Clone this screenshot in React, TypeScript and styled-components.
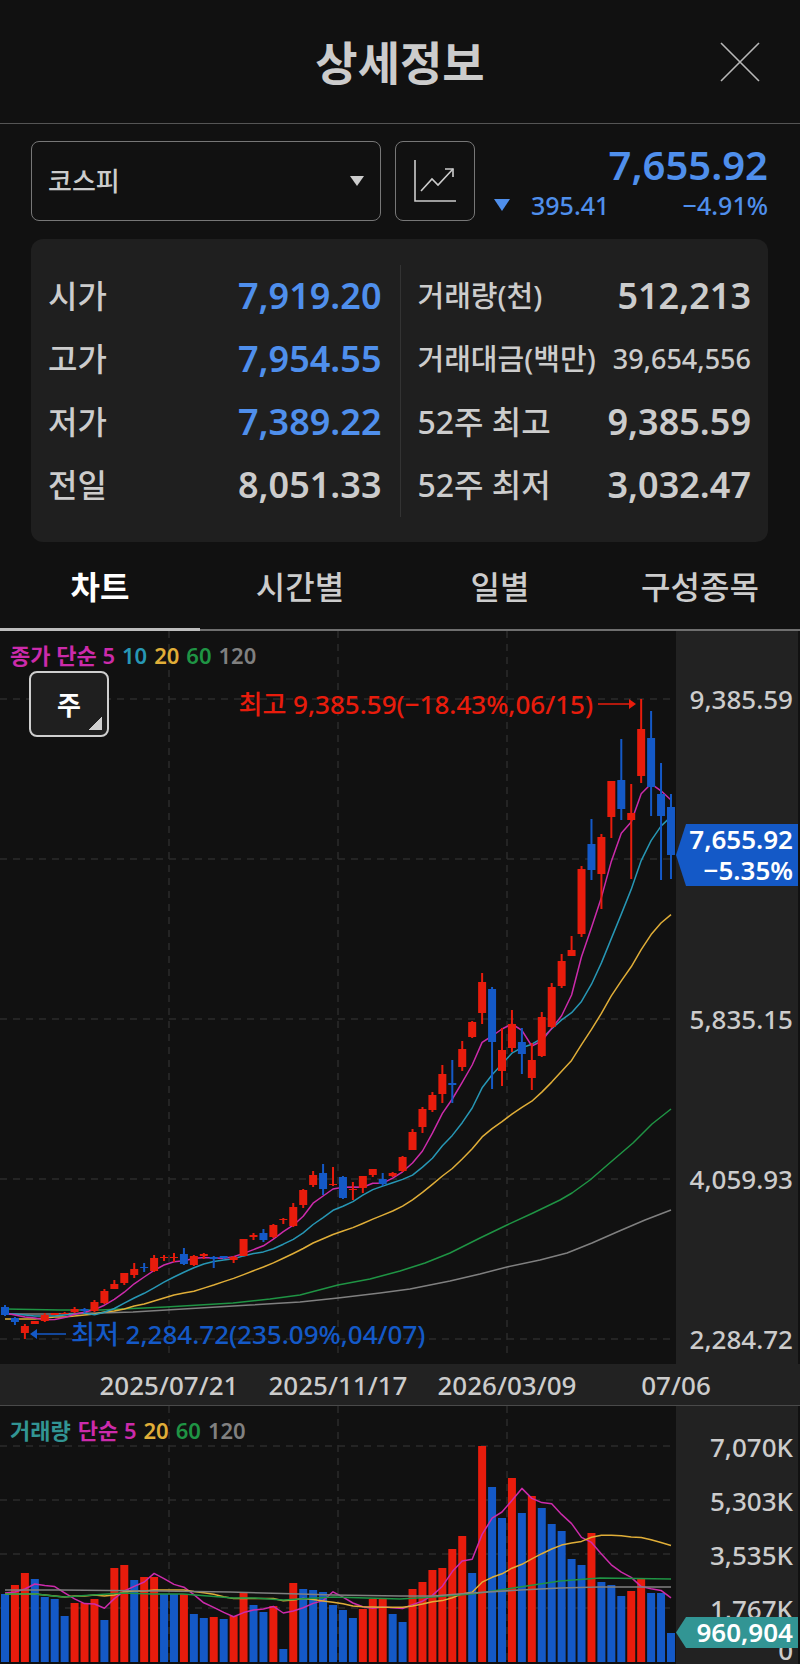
import React, { useState } from 'react';
import styled, { createGlobalStyle } from 'styled-components';

const color = {
  page: '#111111',
  panel: '#1f1f1f',
  axis: '#222222',
  text: '#cccccc',
  blue: '#4f8fec',
  up: '#e81c0c',
  down: '#1459c7',
  teal: '#329594',
  ma5: '#cc2bab',
  ma10: '#2797b5',
  ma20: '#e0ae38',
  ma60: '#1f9444',
  ma120: '#808080',
};

const AXIS_WIDTH = 124;
const PLOT_W = 676;
const PRICE_H = 733;
const VOLUME_H = 258;
const VOLUME_BASE = 256;

/* ---------- data ---------- */

type Candle = [high: number, top: number, bottom: number, low: number, up: 0 | 1];

const candles: Candle[] = [
  [674, 676, 684, 685, 0], [686, 687, 691, 694, 0], [693, 695, 702, 708, 1], [690, 690, 693, 693, 1],
  [682, 684, 690, 691, 1], [682, 682, 684, 684, 1], [681, 682, 683, 683, 1], [676, 678, 681, 682, 1],
  [677, 678, 680, 682, 0], [669, 671, 680, 681, 1], [658, 660, 672, 673, 1], [649, 653, 658, 658, 1],
  [642, 642, 652, 654, 1], [632, 638, 644, 647, 1], [632, 636, 637, 641, 0], [624, 627, 640, 641, 1],
  [624, 626, 627, 630, 1], [622, 626, 627, 631, 1], [617, 623, 633, 634, 0], [624, 625, 634, 635, 1],
  [622, 623, 625, 628, 1], [625, 626, 628, 637, 0], [625, 625, 627, 628, 0], [625, 626, 629, 632, 1],
  [608, 608, 625, 625, 1], [602, 604, 606, 609, 1], [598, 602, 609, 611, 0], [593, 594, 606, 607, 1],
  [587, 588, 589, 593, 1], [572, 576, 595, 596, 1], [558, 559, 574, 577, 1], [540, 544, 554, 556, 1],
  [533, 542, 558, 564, 0], [536, 553, 554, 555, 1], [545, 546, 567, 568, 0], [551, 558, 559, 569, 1],
  [545, 545, 557, 562, 1], [538, 538, 544, 546, 1], [542, 548, 553, 555, 0], [541, 542, 545, 546, 1],
  [525, 526, 540, 541, 1], [498, 501, 519, 519, 1], [476, 478, 496, 502, 1], [461, 464, 479, 481, 1],
  [434, 443, 463, 472, 1], [429, 452, 454, 472, 0], [410, 418, 436, 440, 1], [390, 391, 406, 407, 1],
  [342, 351, 382, 393, 1], [356, 358, 411, 458, 0], [397, 419, 440, 455, 1], [379, 393, 417, 421, 1],
  [397, 411, 423, 443, 0], [412, 429, 447, 459, 1], [381, 386, 425, 426, 1], [352, 356, 396, 397, 1],
  [323, 330, 355, 357, 1], [305, 319, 325, 325, 1], [235, 238, 303, 306, 1], [188, 213, 239, 249, 0],
  [203, 206, 243, 278, 1], [150, 150, 186, 207, 1], [108, 149, 178, 189, 0], [153, 182, 189, 248, 1],
  [68, 98, 145, 152, 1], [80, 107, 156, 185, 0], [132, 163, 185, 249, 0], [163, 176, 224, 248, 0],
];

const volumes = [
  188, 179, 167, 173, 191, 193, 210, 197, 197, 193, 214, 162, 159, 174, 171, 171, 188, 188, 188, 208,
  212, 211, 213, 210, 187, 199, 206, 200, 243, 177, 183, 184, 186, 199, 204, 212, 203, 193, 193, 208,
  216, 183, 176, 164, 162, 143, 130, 167, 40, 81, 112, 72, 107, 90, 102, 118, 125, 153, 159, 127,
  176, 179, 190, 185, 173, 187, 187, 227,
];
const volumeSides = 'drrdddd' + 'rrrdrrdrr' + 'ddrddrdrrddrdr' + 'ddddddrrrdd' + 'rrrrrrdrddrdrddddd' + 'rdddrrddd';

const centre = (i: number) => 5 + i * 9.94;

/* Mean of the last n values; `head` holds the values before a full window exists. */
const movingAverage = (values: number[], n: number, head: number[]) =>
  values
    .map((_, i) => {
      const y = i < n - 1 ? head[i] : values.slice(i - n + 1, i + 1).reduce((a, b) => a + b, 0) / n;
      return `${centre(i).toFixed(1)},${y.toFixed(1)}`;
    })
    .join(' ');

const closes = candles.map(([, top, bottom, , up]) => (up ? top : bottom));

const priceLines = [
  { stroke: color.ma120, points: '5,683 50,683 100,682 133,681 200,677 250,674 300,671 338,667 380,662 410,658 450,650 480,643 507,636 540,629 567,622 592,612 617,601 645,589 671,579' },
  { stroke: color.ma60, points: '5,678 60,679 100,679 166,676 233,672 270,668 300,664 338,654 370,648 400,640 425,632 450,622 480,607 507,594 533,582 560,569 572,562 590,549 612,530 633,512 652,493 671,478' },
  { stroke: color.ma20, points: movingAverage(closes, 20, [688, 688, 688, 688, 687, 686, 686, 685, 684, 683, 681, 680, 678, 675, 673, 670, 667, 664, 662]) },
  { stroke: color.ma10, points: movingAverage(closes, 10, [683, 683, 684, 685, 685, 685, 684, 683, 682]) },
  { stroke: color.ma5, points: movingAverage(closes, 5, [682, 684, 686, 687]) },
];

const volumeLines = [
  { stroke: color.ma5, points: movingAverage(volumes, 5, [187, 186, 183, 178]) },
  { stroke: color.ma20, points: movingAverage(volumes, 20, [188, 188, 188, 188, 189, 190, 191, 190, 190, 189, 190, 189, 186, 185, 185, 184, 184, 184, 184]) },
  { stroke: color.ma60, points: '5,188 35,188 63,191 93,189 123,187 153,188 183,188 233,192 255,192 283,194 333,191 400,193 433,191 472,188 520,181 560,175 600,172 671,173' },
  { stroke: color.ma120, points: '5,184 60,184 160,185 230,186 300,188 333,189 400,190 433,190 472,187 520,184 560,182 600,181 671,181' },
];

const leftStats = [
  { label: '시가', value: '7,919.20', falling: true },
  { label: '고가', value: '7,954.55', falling: true },
  { label: '저가', value: '7,389.22', falling: true },
  { label: '전일', value: '8,051.33' },
];
const rightStats = [
  { label: '거래량(천)', value: '512,213', tightLabel: true },
  { label: '거래대금(백만)', value: '39,654,556', tightLabel: true, tightValue: true },
  { label: '52주 최고', value: '9,385.59' },
  { label: '52주 최저', value: '3,032.47' },
];
const tabs = ['차트', '시간별', '일별', '구성종목'];
const dates = ['2025/07/21', '2025/11/17', '2026/03/09', '07/06'];
const priceTicks = [
  { row: 1, text: '9,385.59' },
  { row: 3, text: '5,835.15' },
  { row: 4, text: '4,059.93' },
  { row: 5, text: '2,284.72' },
];
const volumeTicks = ['7,070K', '5,303K', '3,535K', '1,767K', '0'].map((text, i) => ({ row: i + 1, text }));

/* ---------- styles ---------- */

const GlobalStyle = createGlobalStyle`
  *, *::before, *::after { box-sizing: border-box; }
  body {
    margin: 0;
    background: ${color.page};
    color: ${color.text};
    font-family: 'Noto Sans', 'Noto Sans CJK KR', sans-serif;
    font-weight: 500;
  }
  button, select { font: inherit; color: inherit; }
  dl, dd, ol, p, h1 { margin: 0; padding: 0; }
`;

const Page = styled.main`
  display: flex;
  flex-direction: column;
  min-width: 720px;
`;

const Header = styled.header`
  display: grid;
  grid-template-columns: 1fr auto 1fr;
  align-items: center;
  height: 124px;
  padding: 0 40px;
  border-bottom: 1px solid #555;
`;

const Title = styled.h1`
  grid-column: 2;
  font-size: 46px;
  line-height: 60px;
  font-weight: 700;
`;

const CloseButton = styled.button`
  justify-self: end;
  display: flex;
  padding: 0;
  border: 0;
  background: none;
  cursor: pointer;
`;

const QuoteBar = styled.section`
  display: flex;
  gap: 14px;
  padding: 17px 32px 18px 31px;
`;

const SelectBox = styled.div`
  display: grid;
  flex: 0 1 350px;
  align-items: center;
  & > * { grid-area: 1 / 1; }
  & > svg { justify-self: end; margin-right: 17px; pointer-events: none; }
`;

const MarketSelect = styled.select`
  appearance: none;
  width: 100%;
  height: 80px;
  padding: 0 16px;
  border: 1px solid #777;
  border-radius: 8px;
  background: ${color.page};
  font-size: 26px;
`;

const ChartButton = styled.button`
  display: grid;
  place-items: center;
  width: 80px;
  height: 80px;
  padding: 0;
  border: 1px solid #777;
  border-radius: 8px;
  background: none;
`;

const Quote = styled.div`
  flex: 1;
  display: flex;
  flex-direction: column;
  color: ${color.blue};
`;

const QuotePrice = styled.p`
  font-size: 40px;
  font-weight: 600;
  line-height: 48px;
  text-align: right;
`;

const QuoteChange = styled.p`
  display: flex;
  align-items: center;
  gap: 21px;
  padding-left: 5px;
  font-size: 25px;
  line-height: 32px;
  & > :last-child { margin-left: auto; }
`;

const StatsPanel = styled.section`
  display: grid;
  grid-template-columns: 1fr 1fr;
  margin: 0 32px 0 31px;
  padding: 26px 17px 25px;
  border-radius: 12px;
  background: ${color.panel};
`;

const StatColumn = styled.dl<{ $divided?: boolean }>`
  padding: ${(p) => (p.$divided ? '0 0 0 17px' : '0 18px 0 0')};
  border-left: ${(p) => (p.$divided ? '1px solid #333' : '0')};
`;

const StatRow = styled.div`
  display: flex;
  align-items: center;
  justify-content: space-between;
  height: 63px;
  padding-bottom: 2px;
  white-space: nowrap;
`;

const StatLabel = styled.dt<{ $tight?: boolean }>`
  font-size: ${(p) => (p.$tight ? 29 : 32)}px;
  line-height: 40px;
`;

const StatValue = styled.dd<{ $falling?: boolean; $tight?: boolean }>`
  font-size: ${(p) => (p.$tight ? 27 : 36)}px;
  font-weight: ${(p) => (p.$tight ? 500 : 600)};
  line-height: 40px;
  color: ${(p) => (p.$falling ? color.blue : 'inherit')};
`;

const TabList = styled.div`
  display: grid;
  grid-template-columns: repeat(4, 1fr);
  height: 89px;
  border-bottom: 2px solid #6f6f6f;
`;

const Tab = styled.button<{ $active: boolean }>`
  height: 89px;
  padding: 4px 0 0;
  border: 0;
  border-bottom: 3px solid ${(p) => (p.$active ? '#bdbdbd' : 'transparent')};
  background: none;
  font-size: 32px;
  line-height: 40px;
  font-weight: ${(p) => (p.$active ? 700 : 500)};
  color: ${(p) => (p.$active ? '#fff' : color.text)};
`;

const ChartPane = styled.section<{ $height: number }>`
  display: grid;
  grid-template-columns: minmax(0, 1fr) ${AXIS_WIDTH}px;
  height: ${(p) => p.$height}px;
`;

const PlotArea = styled.div`
  position: relative;
`;

const Plot = styled.svg`
  display: block;
  width: 100%;
  height: 100%;
`;

const PriceAxis = styled.ol`
  position: relative;
  display: grid;
  grid-template-rows: repeat(5, 40px);
  row-gap: 120px;
  align-content: start;
  padding: 48px 5px 0 0;
  border-right: 2px solid ${color.page};
  background: ${color.axis};
  list-style: none;
`;

const VolumeAxis = styled(PriceAxis)`
  grid-template-rows: repeat(4, 54px) 28px;
  row-gap: 0;
  padding-top: 14px;
`;

const Tick = styled.li<{ $row: number }>`
  grid-row: ${(p) => p.$row};
  align-self: center;
  font-size: 26px;
  line-height: 28px;
  text-align: right;
`;

const Tag = styled.div<{ $top: number; $fill: string }>`
  position: absolute;
  top: ${(p) => p.$top}px;
  left: 0;
  right: 0;
  padding-right: 5px;
  background: ${(p) => p.$fill};
  clip-path: polygon(0 50%, 10px 0, 100% 0, 100% 100%, 10px 100%);
  color: #fff;
  font-size: 26px;
  font-weight: 600;
  line-height: 31px;
  text-align: right;
`;

const Legend = styled.p`
  position: absolute;
  top: 9px;
  left: 10px;
  display: flex;
  gap: 7px;
  font-size: 22px;
  font-weight: 600;
  line-height: 30px;
`;

const LegendItem = styled.span<{ $color: string }>`
  color: ${(p) => p.$color};
`;

const PeriodButton = styled.button`
  position: absolute;
  top: 40px;
  left: 29px;
  width: 80px;
  height: 66px;
  padding: 0;
  border: 2px solid #cfcfcf;
  border-radius: 8px;
  background: ${color.panel};
  color: #fff;
  font-size: 26px;
  font-weight: 700;
  &::after {
    content: '';
    position: absolute;
    right: 5px;
    bottom: 5px;
    width: 13px;
    height: 13px;
    background: linear-gradient(135deg, transparent 50%, #cfcfcf 50%);
  }
`;

const Extreme = styled.div<{ $high?: boolean }>`
  position: absolute;
  top: ${(p) => (p.$high ? 57 : 687)}px;
  ${(p) => (p.$high ? 'right: 40px;' : 'left: 30px;')}
  display: flex;
  align-items: center;
  gap: 5px;
  color: ${(p) => (p.$high ? color.up : color.down)};
  font-size: 26px;
  line-height: 32px;
  white-space: nowrap;
`;

const DateBar = styled.div`
  height: 41px;
  background: ${color.axis};
`;

const DateAxis = styled.ol`
  display: grid;
  grid-template-columns: repeat(9, 1fr);
  width: calc((100% - ${AXIS_WIDTH}px) * 9 / 8);
  list-style: none;
`;

const DateTick = styled.li<{ $start: number }>`
  grid-column: ${(p) => p.$start} / span 2;
  grid-row: 1;
  font-size: 26px;
  line-height: 42px;
  text-align: center;
`;

const VolumePane = styled(ChartPane)`
  border-top: 1px solid #4a4a4a;
`;

/* ---------- parts ---------- */

type StatItem = { label: string; value: string; falling?: boolean; tightLabel?: boolean; tightValue?: boolean };

const Stats = ({ items, divided }: { items: StatItem[]; divided?: boolean }) => (
  <StatColumn $divided={divided}>
    {items.map((s) => (
      <StatRow key={s.label}>
        <StatLabel $tight={s.tightLabel}>{s.label}</StatLabel>
        <StatValue $falling={s.falling} $tight={s.tightValue}>{s.value}</StatValue>
      </StatRow>
    ))}
  </StatColumn>
);

const GridLines = ({ rows, height }: { rows: number[]; height: number }) => (
  <g stroke="#2b2b2b" strokeWidth="1.5" strokeDasharray="7 6">
    {rows.map((y) => <line key={y} x1="0" x2={PLOT_W} y1={y} y2={y} />)}
    {[169, 338, 507].map((x) => <line key={x} x1={x} x2={x} y1="0" y2={height} />)}
  </g>
);

const Lines = ({ lines }: { lines: { stroke: string; points: string }[] }) => (
  <g fill="none" strokeWidth="1.5" strokeLinejoin="round">
    {lines.map((l) => <polyline key={l.stroke} stroke={l.stroke} points={l.points} />)}
  </g>
);

const PriceChart = () => (
  <Plot viewBox={`0 0 ${PLOT_W} ${PRICE_H}`} preserveAspectRatio="none" role="img" aria-label="코스피 주봉 차트">
    <GridLines rows={[68, 228, 388, 548, 708]} height={728} />
    <Lines lines={priceLines} />
    {candles.map(([high, top, bottom, low, up], i) => (
      <g key={i} fill={up ? color.up : color.down}>
        <rect x={centre(i) - 1} y={high} width="2" height={low - high} />
        <rect x={centre(i) - 4} y={top} width="8" height={bottom - top} />
      </g>
    ))}
  </Plot>
);

const VolumeChart = () => (
  <Plot viewBox={`0 0 ${PLOT_W} ${VOLUME_H}`} preserveAspectRatio="none" role="img" aria-label="거래량 차트">
    <GridLines rows={[40, 94, 148, 202]} height={VOLUME_BASE} />
    {volumes.map((y, i) => (
      <rect key={i} x={centre(i) - 4} y={y} width="8" height={VOLUME_BASE - y} fill={volumeSides[i] === 'r' ? color.up : color.down} />
    ))}
    <Lines lines={volumeLines} />
  </Plot>
);

export default function App() {
  const [active, setActive] = useState('차트');
  return (
    <Page>
      <GlobalStyle />
      <Header>
        <Title>상세정보</Title>
        <CloseButton aria-label="닫기">
          <svg width="40" height="40" viewBox="0 0 40 40" stroke="#b8b8b8" strokeWidth="1.6">
            <path d="M1 1 39 39M39 1 1 39" />
          </svg>
        </CloseButton>
      </Header>

      <QuoteBar>
        <SelectBox>
          <MarketSelect aria-label="시장" defaultValue="코스피">
            <option>코스피</option>
            <option>코스닥</option>
          </MarketSelect>
          <svg width="14" height="10" viewBox="0 0 14 10" fill={color.text}><path d="M0 0h14L7 10z" /></svg>
        </SelectBox>
        <ChartButton aria-label="차트 보기">
          <svg width="42" height="42" viewBox="0 0 42 42" fill="none" stroke={color.text} strokeWidth="1.6">
            <path d="M1 0V41H42" />
            <path d="M7 31 18 19 24 25 39 9" />
            <path d="M31 9H39V17" />
          </svg>
        </ChartButton>
        <Quote>
          <QuotePrice>7,655.92</QuotePrice>
          <QuoteChange>
            <svg width="16" height="12" viewBox="0 0 16 12" fill={color.blue}><path d="M0 0h16L8 12z" /></svg>
            <span>395.41</span>
            <span>−4.91%</span>
          </QuoteChange>
        </Quote>
      </QuoteBar>

      <StatsPanel>
        <Stats items={leftStats} />
        <Stats items={rightStats} divided />
      </StatsPanel>

      <TabList role="tablist">
        {tabs.map((t) => (
          <Tab key={t} role="tab" aria-selected={t === active} $active={t === active} onClick={() => setActive(t)}>{t}</Tab>
        ))}
      </TabList>

      <ChartPane $height={PRICE_H}>
        <PlotArea>
          <PriceChart />
          <Legend>
            <LegendItem $color={color.ma5}>종가 단순 5</LegendItem>
            <LegendItem $color={color.ma10}>10</LegendItem>
            <LegendItem $color={color.ma20}>20</LegendItem>
            <LegendItem $color={color.ma60}>60</LegendItem>
            <LegendItem $color={color.ma120}>120</LegendItem>
          </Legend>
          <PeriodButton>주</PeriodButton>
          <Extreme $high>
            <span>최고 9,385.59(−18.43%,06/15)</span>
            <svg width="38" height="10" viewBox="0 0 38 10" fill={color.up}><path d="M0 4.3H31V0L38 5 31 10V5.7H0z" /></svg>
          </Extreme>
          <Extreme>
            <svg width="36" height="10" viewBox="0 0 36 10" fill={color.down}><path d="M36 4.3H7V0L0 5 7 10V5.7H36z" /></svg>
            <span>최저 2,284.72(235.09%,04/07)</span>
          </Extreme>
        </PlotArea>
        <PriceAxis>
          {priceTicks.map((t) => <Tick key={t.text} $row={t.row}>{t.text}</Tick>)}
          <Tag as="li" $top={193} $fill={color.down}>7,655.92<br />−5.35%</Tag>
        </PriceAxis>
      </ChartPane>

      <DateBar>
        <DateAxis>
          {dates.map((d, i) => <DateTick key={d} $start={2 + i * 2}>{d}</DateTick>)}
        </DateAxis>
      </DateBar>

      <VolumePane $height={VOLUME_H + 1}>
        <PlotArea>
          <VolumeChart />
          <Legend>
            <LegendItem $color={color.teal}>거래량</LegendItem>
            <LegendItem $color={color.ma5}>단순 5</LegendItem>
            <LegendItem $color={color.ma20}>20</LegendItem>
            <LegendItem $color={color.ma60}>60</LegendItem>
            <LegendItem $color={color.ma120}>120</LegendItem>
          </Legend>
        </PlotArea>
        <VolumeAxis>
          {volumeTicks.map((t) => <Tick key={t.text} $row={t.row}>{t.text}</Tick>)}
          <Tag as="li" $top={211} $fill={color.teal}>960,904</Tag>
        </VolumeAxis>
      </VolumePane>
    </Page>
  );
}
